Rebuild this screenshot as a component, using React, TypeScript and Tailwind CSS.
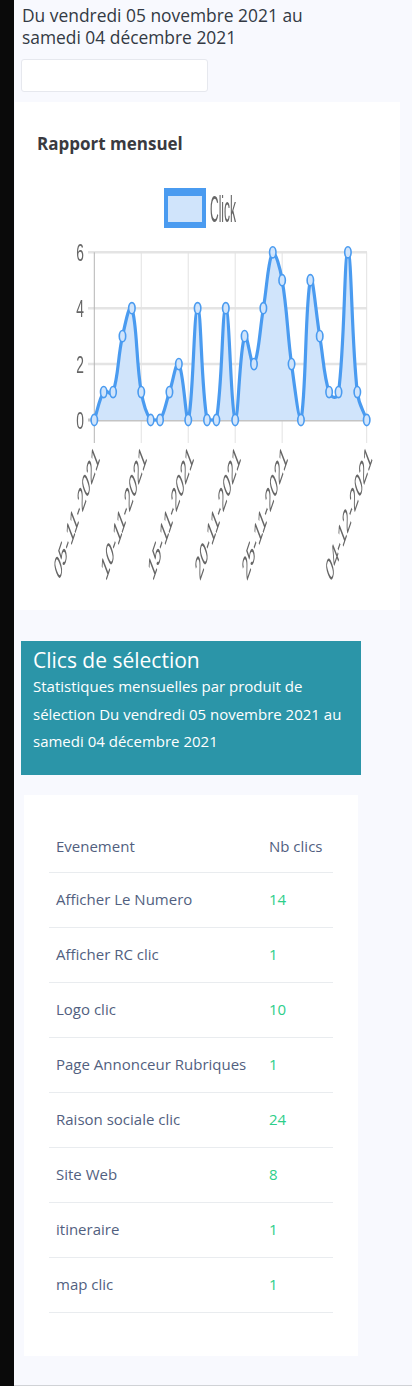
const clicks = [0, 1, 1, 3, 4, 1, 0, 0, 1, 2, 0, 4, 0, 0, 4, 0, 3, 2, 4, 6, 5, 2, 0, 5, 3, 1, 1, 6, 1, 0];

const X0 = 94.3;
const DX = 9.393;
const Y0 = 420;
const DY = 27.95;
const TOP = Y0 - 6 * DY;
const STRETCH = 2.5;

const rows = [
  { label: "Afficher Le Numero", value: 14 },
  { label: "Afficher RC clic", value: 1 },
  { label: "Logo clic", value: 10 },
  { label: "Page Annonceur Rubriques", value: 1 },
  { label: "Raison sociale clic", value: 24 },
  { label: "Site Web", value: 8 },
  { label: "itineraire", value: 1 },
  { label: "map clic", value: 1 },
];

const ticks = [
  { i: 0, label: "05-11-2021" },
  { i: 5, label: "10-11-2021" },
  { i: 10, label: "15-11-2021" },
  { i: 15, label: "20-11-2021" },
  { i: 20, label: "25-11-2021" },
  { i: 29, label: "04-12-2021" },
];

type Pt = { x: number; y: number };

// chart.js style spline (tension 0.4), distances taken in the unstretched canvas
function buildPath(pts: Pt[]) {
  const t = 0.4;
  const clampY = (y: number) => Math.min(Y0, Math.max(TOP, y));
  const cps = pts.map((cur, i) => {
    const prev = pts[i - 1] || cur;
    const next = pts[i + 1] || cur;
    const d01 = Math.hypot(cur.x - prev.x, (cur.y - prev.y) / STRETCH);
    const d12 = Math.hypot(next.x - cur.x, (next.y - cur.y) / STRETCH);
    const tot = d01 + d12 || 1;
    const fa = (t * d01) / tot;
    const fb = (t * d12) / tot;
    return {
      prev: { x: cur.x - fa * (next.x - prev.x), y: clampY(cur.y - fa * (next.y - prev.y)) },
      next: { x: cur.x + fb * (next.x - prev.x), y: clampY(cur.y + fb * (next.y - prev.y)) },
    };
  });
  let d = `M${pts[0].x} ${pts[0].y}`;
  for (let i = 1; i < pts.length; i++) {
    const a = cps[i - 1].next;
    const b = cps[i].prev;
    d += ` C${a.x.toFixed(2)} ${a.y.toFixed(2)} ${b.x.toFixed(2)} ${b.y.toFixed(2)} ${pts[i].x.toFixed(2)} ${pts[i].y.toFixed(2)}`;
  }
  return d;
}

function MonthlyChart() {
  const pts = clicks.map((v, i) => ({ x: X0 + i * DX, y: Y0 - v * DY }));
  const line = buildPath(pts);
  const area = `${line} L${pts[pts.length - 1].x} ${Y0} L${pts[0].x} ${Y0} Z`;
  const blue = "#4a9bf0";
  const font = "'Liberation Sans', Arial, sans-serif";

  return (
    <svg width="385" height="430" viewBox="15 170 385 430" className="block">
      <defs>
        <filter id="gray">
          <feColorMatrix type="saturate" values="0" />
        </filter>
      </defs>

      {/* legend */}
      <rect x="164" y="188" width="42" height="40" fill={blue} />
      <rect x="168" y="196" width="34" height="26" fill="#d0e4fb" />

      {/* horizontal grid */}
      {[6, 4, 2].map((v) => (
        <line key={v} x1="88" x2="367" y1={Y0 - v * DY} y2={Y0 - v * DY} stroke="#e4e4e4" strokeWidth="2.5" />
      ))}
      {/* vertical grid */}
      {ticks.map((tk) => (
        <line key={tk.i} x1={X0 + tk.i * DX} x2={X0 + tk.i * DX} y1={TOP} y2="443" stroke={tk.i === 0 ? "#b5b5b5" : "#e2e2e2"} strokeWidth="1" />
      ))}
      <line x1="88" x2="367" y1={Y0} y2={Y0} stroke="#c4c4c4" strokeWidth="3" />

      {/* data */}
      <path d={area} fill="#d0e4fb" />
      <path d={line} fill="none" stroke={blue} strokeWidth="3.2" strokeLinejoin="round" />
      {pts.map((p, i) => (
        <ellipse key={i} cx={p.x} cy={p.y} rx="3.2" ry="5.6" fill="#d0e4fb" stroke={blue} strokeWidth="1.6" />
      ))}

      {/* all chart text, rendered grey */}
      <g filter="url(#gray)" fill="#666" fontFamily={font} fontSize="12">
        <text x="0" y="0" transform="translate(210 222) scale(1 3)">
          Click
        </text>
        {[6, 4, 2, 0].map((v) => (
          <text
            key={v}
            x="0"
            y="0"
            textAnchor="end"
            dominantBaseline="central"
            transform={`translate(84 ${Y0 - v * DY}) scale(1.15 2)`}
          >
            {v}
          </text>
        ))}
        {ticks.map((tk) => (
          <text
            key={tk.i}
            x="0"
            y="0"
            textAnchor="end"
            dominantBaseline="central"
            transform={`matrix(0.684 -2.03 0.729 1.92 ${X0 + tk.i * DX + 3} 451)`}
          >
            {tk.label}
          </text>
        ))}
      </g>
    </svg>
  );
}

export default function App() {
  return (
    <div className="flex w-[412px] h-[1386px] font-['Open_Sans','Noto_Sans',sans-serif]">
      <div className="w-[14px] shrink-0 bg-[#0a0a0a]" />
      <div className="flex-1 bg-[#f8f9fe] border-b border-[#d0d2d6] flex flex-col">
        <p className="pl-[8px] pt-[4px] text-[17.4px] leading-[22px] text-[#333a44] whitespace-nowrap">
          Du vendredi 05 novembre 2021 au<br />samedi 04 décembre 2021
        </p>
        <div className="ml-[7px] mt-[11px] w-[187px] h-[33px] bg-white border border-[#e6e8ee] rounded-[3px]" />

        <div className="ml-[1px] mt-[10px] w-[385px] bg-white pt-[30px] pb-[10px]">
          <h3 className="pl-[22px] text-[17px] leading-[24px] font-bold text-[#3a3a3f]">Rapport mensuel</h3>
          <div className="mt-[14px]">
            <MonthlyChart />
          </div>
        </div>

        <div className="ml-[7px] mt-[31px] w-[340px] bg-[#2b95a8] px-[12px] pt-[7px] pb-[19px] text-white">
          <h2 className="text-[21px] leading-[24px]">Clics de sélection</h2>
          <p className="mt-[1px] text-[15px] leading-[27.5px] whitespace-nowrap">
            Statistiques mensuelles par produit de<br />sélection Du vendredi 05 novembre 2021 au<br />samedi 04 décembre 2021
          </p>
        </div>

        <div className="ml-[10px] mt-[20px] w-[334px] bg-white px-[25px] pt-[26px] pb-[43px]">
          <div className="grid grid-cols-[213px_1fr] h-[52px] items-center border-b border-[#e9ecef] px-[7px] text-[15px] font-medium text-[#525f7f]">
            <span>Evenement</span>
            <span>Nb clics</span>
          </div>
          {rows.map((r) => (
            <div
              key={r.label}
              className="grid grid-cols-[213px_1fr] h-[55px] items-center border-b border-[#e9ecef] px-[7px] text-[15px] text-[#525f7f]"
            >
              <span className="whitespace-nowrap">{r.label}</span>
              <span className="text-[#2dce89]">{r.value}</span>
            </div>
          ))}
        </div>
      </div>
    </div>
  );
}
